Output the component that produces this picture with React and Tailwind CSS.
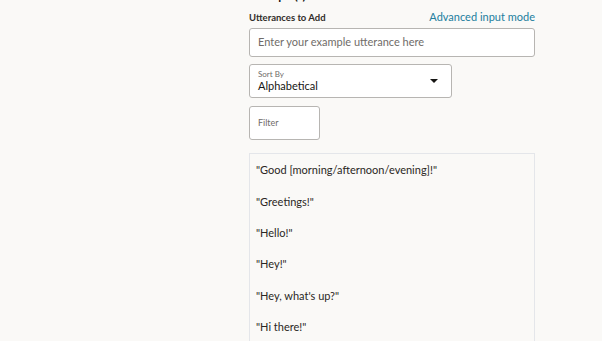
import React from "react";

const utterances = [
  "\"Good [morning/afternoon/evening]!\"",
  "\"Greetings!\"",
  "\"Hello!\"",
  "\"Hey!\"",
  "\"Hey, what's up?\"",
  "\"Hi there!\"",
  "\"Howdy!\"",
];

const App = () => {
  return (
    <div
      className="h-[341px] w-[602px] overflow-hidden bg-[#faf9f7] text-[#161513]"
      style={{ fontFamily: "Lato, 'Open Sans', sans-serif" }}
    >
      <div className="ml-[249px] w-[286px]">
        {/* Section heading, scrolled mostly out of view */}
        <h2 className="-mt-[11px] h-[14px] text-[12px] font-bold leading-[14px]">
          Example(s)
        </h2>

        {/* Utterance input */}
        <div className="mt-[5px] flex h-[16px] items-end justify-between">
          <label className="text-[9.5px] font-bold leading-[13px] text-[#312d2a]">
            Utterances to Add
          </label>
          <a className="text-[11px] leading-[15px] text-[#227e9e]">
            Advanced input mode
          </a>
        </div>
        <div className="mt-[4px] flex h-[29px] items-center rounded-[3px] border border-[#b7b5b2] bg-white px-[8px]">
          <span className="text-[11px] text-[#6f6c69]">
            Enter your example utterance here
          </span>
        </div>

        {/* Sort select */}
        <div className="mt-[7px] flex h-[34px] w-[203px] items-center justify-between rounded-[3px] border border-[#b7b5b2] bg-white pl-[8px] pr-[13px]">
          <div className="flex flex-col">
            <span className="text-[8px] leading-[10px] text-[#6f6c69]">Sort By</span>
            <span className="text-[11px] leading-[14px] text-[#161513]">Alphabetical</span>
          </div>
          <svg width="8" height="4" viewBox="0 0 8 4">
            <path d="M0 0 H8 L4 4 Z" fill="#161513" />
          </svg>
        </div>

        {/* Filter */}
        <div className="mt-[8px] flex h-[34px] w-[71px] items-center rounded-[3px] border border-[#b7b5b2] bg-white px-[8px]">
          <span className="text-[9px] text-[#6f6c69]">Filter</span>
        </div>

        {/* Utterance list */}
        <div className="mt-[13px] h-[260px] border border-[#e4e6ea] bg-[#faf9f7] pt-[1px]">
          {utterances.map((u) => (
            <div key={u} className="flex h-[31.3px] items-center px-[6px] text-[11px] text-[#2a2724]">
              {u}
            </div>
          ))}
        </div>
      </div>
    </div>
  );
};

export default App;
